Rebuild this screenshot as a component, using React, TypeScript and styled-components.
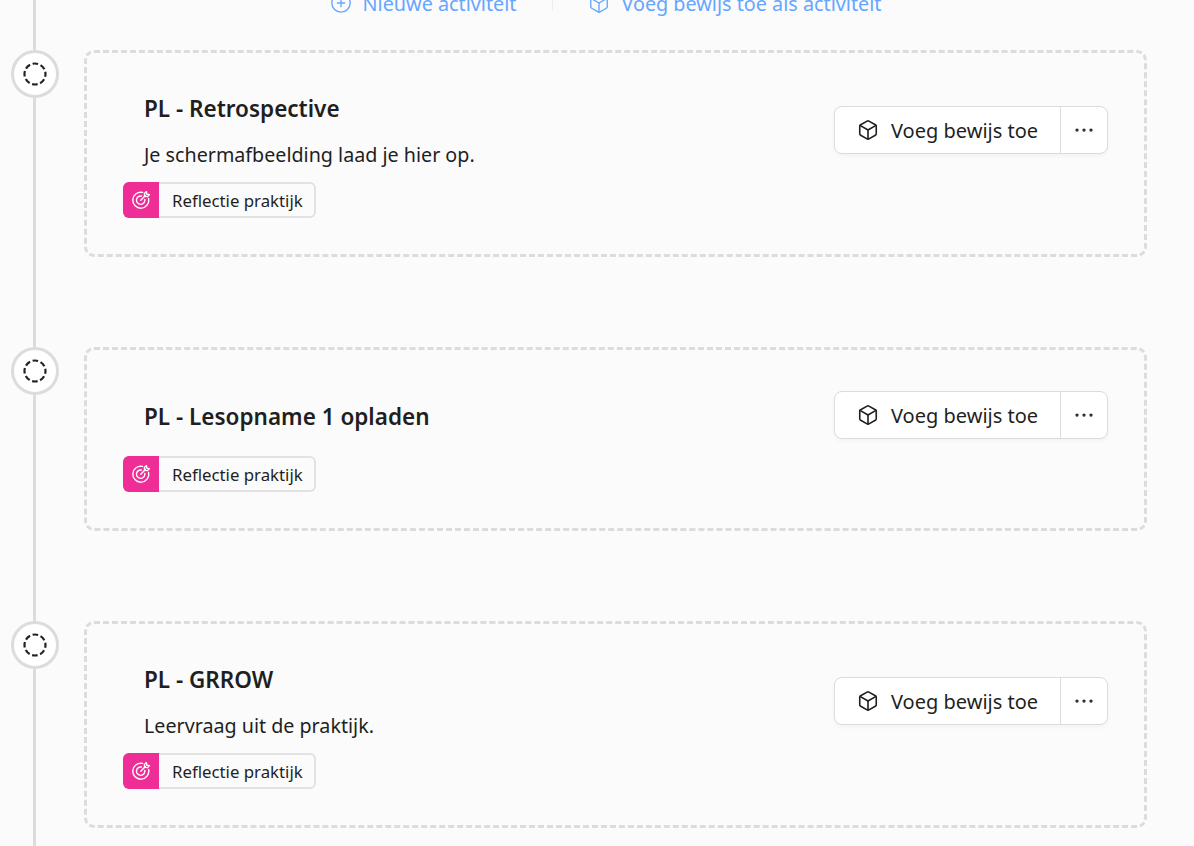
import styled, { createGlobalStyle } from "styled-components";
import { Box, CirclePlus, Ellipsis } from "lucide-react";

const GlobalStyle = createGlobalStyle`
  html, body {
    margin: 0;
    padding: 0;
    background: #fbfbfb;
    font-family: "Noto Sans", "Open Sans", sans-serif;
    color: #1f1f1f;
  }
`;

const Page = styled.div`
  position: relative;
  width: 1194px;
  height: 846px;
  overflow: hidden;
`;

const TimelineLine = styled.div`
  position: absolute;
  left: 33px;
  top: 0;
  bottom: 0;
  width: 3px;
  background: #dcdcdc;
`;

const Toolbar = styled.div`
  display: flex;
  align-items: center;
  justify-content: center;
  height: 36px;
  margin-top: -15px;
  margin-bottom: 29px;
  padding-left: 17px;
  color: #66a6ff;
  font-size: 19.8px;
`;

const ToolbarAction = styled.div`
  display: flex;
  align-items: center;
  gap: 11px;
  padding: 0 35px;

  &:first-child {
    padding-right: 36px;
  }
`;

const ToolbarDivider = styled.div`
  width: 1px;
  height: 16px;
  background: #eeeeee;
`;

const Timeline = styled.div`
  position: relative;
  display: flex;
  flex-direction: column;
  gap: 90px;
  padding-left: 11px;
`;

const Row = styled.div`
  display: flex;
  align-items: flex-start;
  gap: 25px;
`;

const Marker = styled.div`
  flex: none;
  box-sizing: border-box;
  width: 48px;
  height: 48px;
  display: flex;
  align-items: center;
  justify-content: center;
  border: 3px solid #dcdcdc;
  border-radius: 50%;
  background: #ffffff;
`;

const Card = styled.div<{ $compact?: boolean }>`
  box-sizing: border-box;
  width: 1063px;
  padding: ${(p) => (p.$compact ? "41px" : "39px")} 36px 36px 36px;
  border: 3px dashed #dcdcdc;
  border-radius: 10px;
`;

const Head = styled.div`
  display: flex;
  align-items: flex-start;
  justify-content: space-between;
`;

const Text = styled.div`
  padding-left: 21px;
`;

const Title = styled.h3<{ $compact?: boolean }>`
  margin: ${(p) => (p.$compact ? "10px 0 23px" : "1px 0 0")};
  font-size: 22.5px;
  font-weight: 600;
  line-height: 32px;
`;

const Description = styled.p`
  margin: 14px 0 11px;
  font-size: 19.7px;
  line-height: 32px;
`;

const ButtonGroup = styled.div<{ $compact?: boolean }>`
  display: flex;
  box-sizing: border-box;
  height: 48px;
  margin-top: ${(p) => (p.$compact ? "0" : "14px")};
  border: 1px solid #dcdcdc;
  border-radius: 8px;
  background: #ffffff;
  box-shadow: 0 2px 4px rgba(0, 0, 0, 0.04);
  font-size: 20px;
`;

const MainButton = styled.div`
  display: flex;
  align-items: center;
  gap: 12px;
  width: 226px;
  box-sizing: border-box;
  padding-left: 22px;
  border-right: 1px solid #dcdcdc;
`;

const MenuButton = styled.div`
  display: flex;
  align-items: center;
  justify-content: center;
  box-sizing: border-box;
  width: 46px;
  padding-right: 1px;
`;

const Tag = styled.div`
  display: inline-flex;
  box-sizing: border-box;
  height: 36px;
  border: 2px solid #e2e2e2;
  border-left: none;
  border-radius: 6px;
  font-size: 16.8px;
  background: #fbfbfb;
`;

const TagIcon = styled.div`
  width: 36px;
  height: 36px;
  margin-top: -2px;
  display: flex;
  align-items: center;
  justify-content: center;
  border-radius: 6px 0 0 6px;
  background: #ee2d97;
`;

const TagLabel = styled.div`
  display: flex;
  align-items: center;
  padding: 0 11px 0 13px;
`;

function DashedCircle() {
  return (
    <svg width="24" height="24" viewBox="0 0 24 24" fill="none" stroke="#222" strokeWidth="2.2">
      <circle cx="12" cy="12" r="10.5" strokeDasharray="5.6 2.65" strokeDashoffset="2.8" />
    </svg>
  );
}

function GoalIcon() {
  return (
    <svg width="20" height="20" viewBox="0 0 20 20" fill="none" stroke="#fff" strokeWidth="1.4" strokeLinecap="round" strokeLinejoin="round">
      <path d="M17.6 8.4A8 8 0 1 1 11.6 2.4" />
      <path d="M13.8 9.4A4.2 4.2 0 1 1 10.4 6" />
      <path d="M9.8 10.2 14.4 5.6" />
      <path d="M13.4 3.4 13.6 6.4 16.6 6.6 18.4 4.6 15.8 4.2 15.4 1.6Z" />
    </svg>
  );
}

type Item = { title: string; description?: string };

const items: Item[] = [
  { title: "PL - Retrospective", description: "Je schermafbeelding laad je hier op." },
  { title: "PL - Lesopname 1 opladen" },
  { title: "PL - GRROW", description: "Leervraag uit de praktijk." },
];

export default function App() {
  return (
    <Page>
      <GlobalStyle />
      <TimelineLine />
      <Toolbar>
        <ToolbarAction>
          <CirclePlus size={22} strokeWidth={1.5} />
          Nieuwe activiteit
        </ToolbarAction>
        <ToolbarDivider />
        <ToolbarAction>
          <Box size={22} strokeWidth={1.5} />
          Voeg bewijs toe als activiteit
        </ToolbarAction>
      </Toolbar>
      <Timeline>
        {items.map((item) => {
          const compact = !item.description;
          return (
            <Row key={item.title}>
              <Marker>
                <DashedCircle />
              </Marker>
              <Card $compact={compact}>
                <Head>
                  <Text>
                    <Title $compact={compact}>{item.title}</Title>
                    {item.description && <Description>{item.description}</Description>}
                  </Text>
                  <ButtonGroup $compact={compact}>
                    <MainButton>
                      <Box size={22} strokeWidth={1.75} />
                      Voeg bewijs toe
                    </MainButton>
                    <MenuButton>
                      <Ellipsis size={24} strokeWidth={1.25} />
                    </MenuButton>
                  </ButtonGroup>
                </Head>
                <Tag>
                  <TagIcon>
                    <GoalIcon />
                  </TagIcon>
                  <TagLabel>Reflectie praktijk</TagLabel>
                </Tag>
              </Card>
            </Row>
          );
        })}
      </Timeline>
    </Page>
  );
}
